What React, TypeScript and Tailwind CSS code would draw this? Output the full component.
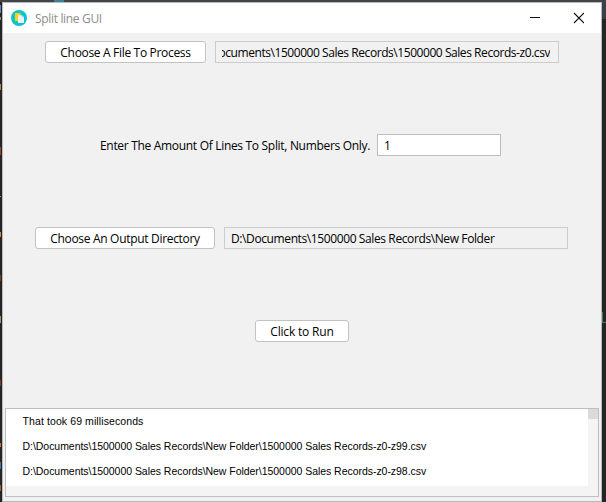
import React from "react";

const ui = "font-['Open_Sans','Noto_Sans',sans-serif] text-[12px] leading-[20px] whitespace-pre text-black";

function Button({ label, className }: { label: string; className: string }) {
  return (
    <button
      className={`${ui} flex h-[22px] shrink-0 items-center justify-center rounded-[3px] border border-[#c2c2c2] bg-white pt-[2px] ${className}`}
    >
      {label}
    </button>
  );
}

const marks = [
  "top-[5px] h-[8px] bg-[#5d86b0]",
  "top-[17px] h-[3px] bg-[#85888b]",
  "top-[84px] h-[6px] bg-[#a98355]",
  "top-[147px] h-[8px] bg-[#93452c]",
  "top-[196px] h-[1px] bg-[#e07c35]",
  "top-[232px] h-[5px] bg-[#d88346]",
  "top-[275px] h-[6px] bg-[#7d3c22]",
  "top-[316px] h-[7px] bg-[#a78c68]",
  "top-[380px] h-[6px] bg-[#7d3c22]",
  "top-[443px] h-[4px] bg-[#df6b2c]",
  "top-[462px] h-[7px] bg-[#3f74aa]",
  "top-[485px] h-[6px] bg-[#9b5f35]",
];

export default function App() {
  return (
    <div className="relative h-[502px] w-[606px] overflow-hidden bg-[#252525] pl-[2px] pt-[2px]">
      <div className="absolute left-0 top-0 h-[2px] w-[606px] bg-[#414548]" />
      <div className="absolute left-[54px] top-0 h-[2px] w-[10px] bg-[#3f8094]" />
      <div className="absolute left-[602px] top-0 h-[19px] w-[4px] bg-[#3a4146]" />
      <div className="absolute left-[602px] top-[312px] h-[11px] w-[4px] border-b border-l border-[#527c52]" />
      {marks.map((m) => (
        <div key={m} className={`absolute left-0 w-[1px] ${m}`} />
      ))}
      <div className="relative flex h-[500px] w-[600px] flex-col border border-[#b9b9b9] bg-[#f1f1f1]">
        <header className="flex h-[30px] shrink-0 items-center bg-white pl-[8px]">
          <svg width="16" height="16" viewBox="0 0 16 16">
            <circle cx="8" cy="8" r="8" fill="#08c4cb" />
            <path d="M4 3h5.5v8H4z" fill="#ffcf1c" />
            <path d="M7 5.2h3.8l2.2 2.1v5.7H7z" fill="#edf0f7" />
            <path d="M10.8 5.2v2.1H13z" fill="#c3cde0" />
          </svg>
          <span className="ml-[8px] mt-[2px] whitespace-pre font-['Open_Sans','Noto_Sans',sans-serif] text-[12px] leading-[20px] tracking-[-0.33px] text-[#8d8d8d]">
            Split line GUI
          </span>
          <svg className="ml-auto mr-[17px]" width="56" height="12" viewBox="0 0 56 12" fill="none" stroke="#111">
            <path d="M2 5.5h10" />
            <path d="M46 1l10 10M56 1l-10 10" strokeWidth="1.1" />
          </svg>
        </header>
        <div className="flex h-[375px] shrink-0 flex-col gap-[71px] pt-[8px]">
          <div className="flex gap-[9px] pl-[42px]">
            <Button label="Choose A File To Process" className="w-[161px] tracking-[-0.32px]" />
            <div className="flex h-[22px] w-[344px] items-center border border-[#cccccc] pl-[6px] pr-[8px] pt-[2px]">
              <div className={`${ui} flex w-full justify-end overflow-hidden tracking-[-0.44px]`}>
                <span>D:\Documents\1500000 Sales Records\1500000 Sales Records-z0.csv</span>
              </div>
            </div>
          </div>
          <div className="flex pl-[97px]">
            <div className={`${ui} w-[277px] pt-[2px] tracking-[-0.31px]`}>Enter The Amount Of Lines To Split, Numbers Only.</div>
            <div className={`${ui} h-[22px] w-[124px] border border-[#bdbdbd] bg-white pl-[6px] pt-[1px]`}>1</div>
          </div>
          <div className="flex gap-[9px] pl-[32px]">
            <Button label="Choose An Output Directory" className="w-[180px] tracking-[-0.31px]" />
            <div className={`${ui} h-[22px] w-[344px] border border-[#cccccc] pl-[6px] pt-[1px] tracking-[-0.39px]`}>
              {"D:\\Documents\\1500000 Sales Records\\New Folder"}
            </div>
          </div>
          <div className="flex pl-[252px]">
            <Button label="Click to Run" className="w-[94px] tracking-[-0.17px]" />
          </div>
        </div>
        <div className="ml-[2px] flex h-[89px] w-[594px] border border-[#bfbfbf] bg-[#f4f4f4]">
          <div className="flex h-[77px] w-[582px] flex-col bg-white pl-[16.5px] font-['Liberation_Sans',Arial,sans-serif] text-[10.5px] leading-[25px] whitespace-pre text-black">
            <span className="tracking-[0.1px]">That took 69 milliseconds</span>
            <span className="tracking-[-0.04px]">{"D:\\Documents\\1500000 Sales Records\\New Folder\\1500000 Sales Records-z0-z99.csv"}</span>
            <span className="tracking-[-0.04px]">{"D:\\Documents\\1500000 Sales Records\\New Folder\\1500000 Sales Records-z0-z98.csv"}</span>
          </div>
          <div className="h-[10px] w-[10px] bg-[#dadada]" />
        </div>
      </div>
    </div>
  );
}
